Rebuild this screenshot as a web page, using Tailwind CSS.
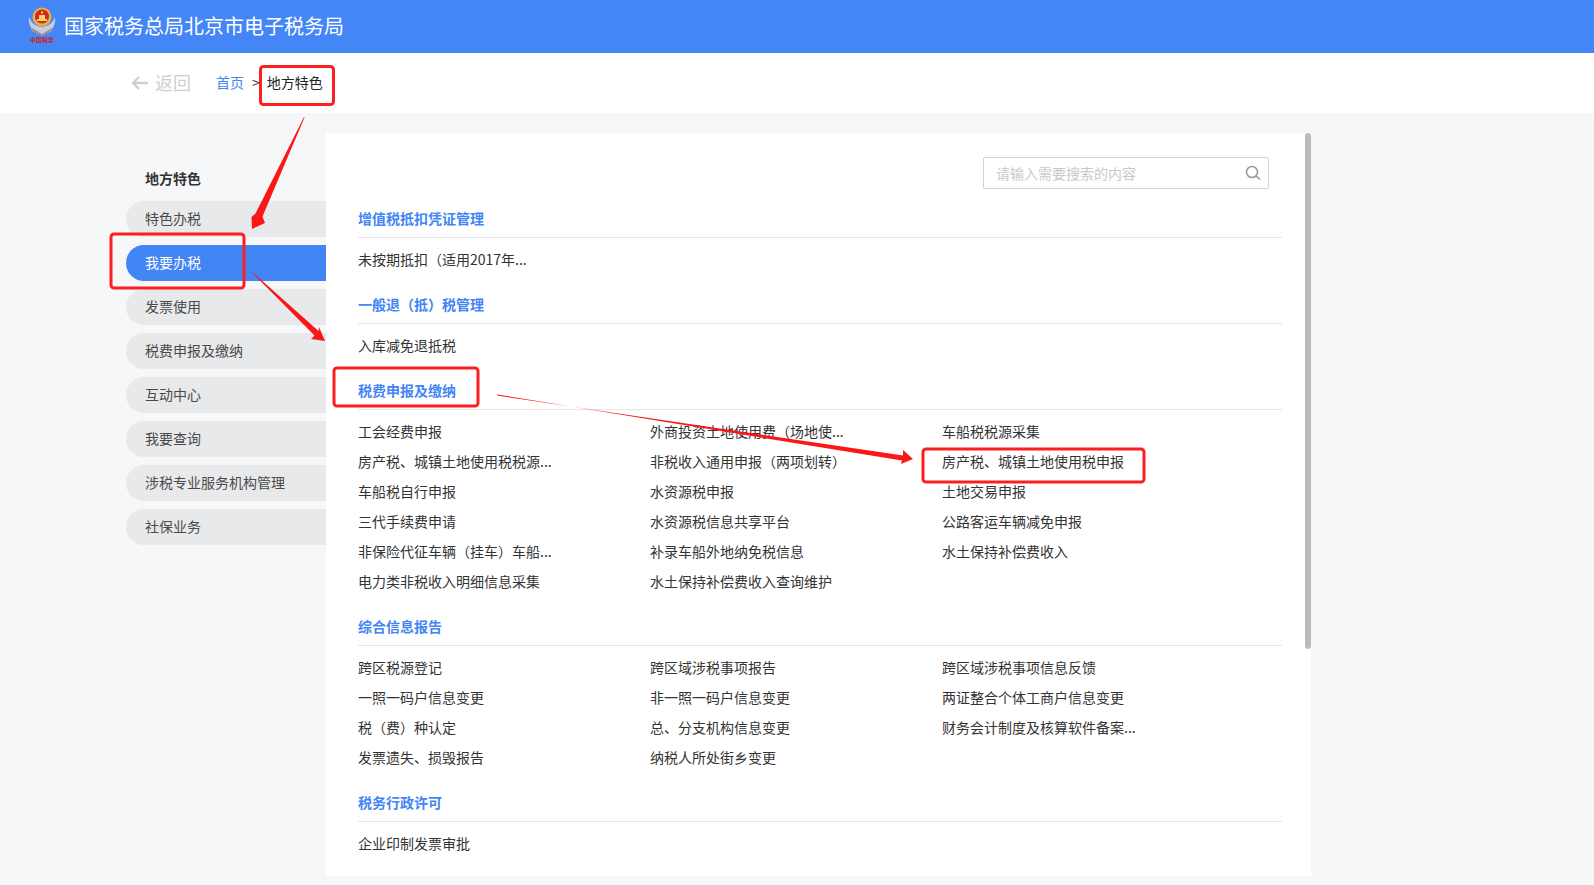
<!DOCTYPE html>
<html lang="zh-CN">

<head>
    <meta charset="UTF-8">
    <title>国家税务总局北京市电子税务局</title>
    <script src="https://cdn.jsdelivr.net/npm/@tailwindcss/browser@4"></script>
</head>

<body class="relative h-[885px] overflow-hidden bg-[#f6f7f9] text-[14px] text-[#333] font-['Noto_Sans_CJK_SC','Liberation_Sans',sans-serif]">
    <!-- header -->
    <header class="h-[53px] bg-[#4486f6] flex items-center pl-[27px]">
        <svg class="w-[30px] h-[46px] shrink-0" viewBox="0 3 30 46">
            <path d="M2 16c-1 7 2 13 8 16l5 1 5-1c6-3 9-9 8-16-2 5-5 9-13 10-8-1-11-5-13-10z" fill="#c9cdd6" />
            <path d="M5 27l10 6 10-6 1 3-11 5-11-5z" fill="#8e97a8" />
            <circle cx="15" cy="16" r="9.500" fill="#e3b04b" />
            <circle cx="15" cy="15.500" r="7" fill="#d8261c" />
            <path d="M10 18h10v2H10zM12 14h6v4h-6zM14 10.500h2v2h-2z" fill="#f6d463" />
            <text x="15" y="40.500" text-anchor="middle" font-size="6" font-weight="700" fill="#c9221a" font-family="'Noto Sans CJK SC',sans-serif">中国税务</text>
        </svg>
        <span class="ml-[7px] pb-[2px] text-[20px] text-white">国家税务总局北京市电子税务局</span>
    </header>

    <!-- breadcrumb -->
    <div class="h-[60px] bg-white flex items-center pl-[131px]">
        <svg class="w-[17px] h-[14px] text-[#cfcfcf]" viewBox="0 0 17 14" fill="none" stroke="currentColor" stroke-width="2.400">
            <path d="M17 7H2M8 1L2 7l6 6" />
        </svg>
        <span class="ml-[7px] pb-[2px] text-[18px] text-[#cfcfcf]">返回</span>
        <a href="#" class="ml-[25px] pb-[2px] text-[#4285f4]">首页</a>
        <span class="ml-[8px] pb-[2px] text-[#333]">&gt;</span>
        <span class="ml-[7px] pb-[2px] text-[#222]">地方特色</span>
    </div>

    <div class="flex mt-[20px]">
        <!-- sidebar -->
        <aside class="w-[326px] pl-[126px] pt-[31px]">
            <h2 class="h-[37px] pl-[19px] font-bold leading-[28px]">地方特色</h2>
            <ul class="flex flex-col gap-[8px] text-[#4a4a4a]">
                <li class="h-[36px] pl-[19px] pb-[2px] flex items-center rounded-l-full bg-[#e8e9eb]">特色办税</li>
                <li class="h-[36px] pl-[19px] pb-[2px] flex items-center rounded-l-full bg-[#4285f4] text-white">我要办税</li>
                <li class="h-[36px] pl-[19px] pb-[2px] flex items-center rounded-l-full bg-[#e8e9eb]">发票使用</li>
                <li class="h-[36px] pl-[19px] pb-[2px] flex items-center rounded-l-full bg-[#e8e9eb]">税费申报及缴纳</li>
                <li class="h-[36px] pl-[19px] pb-[2px] flex items-center rounded-l-full bg-[#e8e9eb]">互动中心</li>
                <li class="h-[36px] pl-[19px] pb-[2px] flex items-center rounded-l-full bg-[#e8e9eb]">我要查询</li>
                <li class="h-[36px] pl-[19px] pb-[2px] flex items-center rounded-l-full bg-[#e8e9eb]">涉税专业服务机构管理</li>
                <li class="h-[36px] pl-[19px] pb-[2px] flex items-center rounded-l-full bg-[#e8e9eb]">社保业务</li>
            </ul>
        </aside>

        <!-- panel -->
        <main class="relative w-[985px] h-[743px] bg-white pl-[32px] pr-[29px] pt-[24px] overflow-hidden">
            <div class="flex justify-end mr-[13px] mb-[11px]">
                <div class="w-[286px] h-[32px] border border-[#d2d2d2] rounded-[2px] flex items-center pl-[12px] pr-[7px]">
                    <input type="text" placeholder="请输入需要搜索的内容" class="flex-1 outline-none placeholder:text-[#c8c8c8]">
                    <svg class="w-[16px] h-[16px] text-[#9a9a9a]" viewBox="0 0 16 16" fill="none" stroke="currentColor" stroke-width="1.600">
                        <circle cx="7" cy="7" r="5.500" />
                        <path d="M11 11l4 3.500" />
                    </svg>
                </div>
            </div>

            <section class="mb-[12px]">
                <h3 class="h-[38px] flex items-center border-b border-[#e6e6e6] pb-[1px] font-bold text-[#4285f4] mb-[6px]">增值税抵扣凭证管理</h3>
                <div class="grid grid-cols-[292px_292px_292px] auto-rows-[30px] items-center">
                    <a href="#">未按期抵扣（适用2017年...</a>
                </div>
            </section>

            <section class="mb-[12px]">
                <h3 class="h-[38px] flex items-center border-b border-[#e6e6e6] pb-[1px] font-bold text-[#4285f4] mb-[6px]">一般退（抵）税管理</h3>
                <div class="grid grid-cols-[292px_292px_292px] auto-rows-[30px] items-center">
                    <a href="#">入库减免退抵税</a>
                </div>
            </section>

            <section class="mb-[12px]">
                <h3 class="h-[38px] flex items-center border-b border-[#e6e6e6] pb-[1px] font-bold text-[#4285f4] mb-[6px]">税费申报及缴纳</h3>
                <div class="grid grid-cols-[292px_292px_292px] auto-rows-[30px] items-center">
                    <a href="#">工会经费申报</a>
                    <a href="#">外商投资土地使用费（场地使...</a>
                    <a href="#">车船税税源采集</a>
                    <a href="#">房产税、城镇土地使用税税源...</a>
                    <a href="#">非税收入通用申报（两项划转）</a>
                    <a href="#">房产税、城镇土地使用税申报</a>
                    <a href="#">车船税自行申报</a>
                    <a href="#">水资源税申报</a>
                    <a href="#">土地交易申报</a>
                    <a href="#">三代手续费申请</a>
                    <a href="#">水资源税信息共享平台</a>
                    <a href="#">公路客运车辆减免申报</a>
                    <a href="#">非保险代征车辆（挂车）车船...</a>
                    <a href="#">补录车船外地纳免税信息</a>
                    <a href="#">水土保持补偿费收入</a>
                    <a href="#">电力类非税收入明细信息采集</a>
                    <a href="#">水土保持补偿费收入查询维护</a>
                </div>
            </section>

            <section class="mb-[12px]">
                <h3 class="h-[38px] flex items-center border-b border-[#e6e6e6] pb-[1px] font-bold text-[#4285f4] mb-[6px]">综合信息报告</h3>
                <div class="grid grid-cols-[292px_292px_292px] auto-rows-[30px] items-center">
                    <a href="#">跨区税源登记</a>
                    <a href="#">跨区域涉税事项报告</a>
                    <a href="#">跨区域涉税事项信息反馈</a>
                    <a href="#">一照一码户信息变更</a>
                    <a href="#">非一照一码户信息变更</a>
                    <a href="#">两证整合个体工商户信息变更</a>
                    <a href="#">税（费）种认定</a>
                    <a href="#">总、分支机构信息变更</a>
                    <a href="#">财务会计制度及核算软件备案...</a>
                    <a href="#">发票遗失、损毁报告</a>
                    <a href="#">纳税人所处街乡变更</a>
                </div>
            </section>

            <section>
                <h3 class="h-[38px] flex items-center border-b border-[#e6e6e6] pb-[1px] font-bold text-[#4285f4] mb-[6px]">税务行政许可</h3>
                <div class="grid grid-cols-[292px_292px_292px] auto-rows-[30px] items-center">
                    <a href="#">企业印制发票审批</a>
                </div>
            </section>

            <!-- scrollbar thumb -->
            <div class="absolute right-0 top-0 w-[6px] h-[516px] rounded-[3px] bg-[#bbbbbb]"></div>
        </main>
    </div>

    <!-- red annotations drawn over the page -->
    <svg class="absolute left-0 top-0 w-[1594px] h-[885px] pointer-events-none" viewBox="0 0 1594 885" fill="none">
        <g stroke="#fb1f1f" stroke-width="3">
            <rect x="260.500" y="66.500" width="73" height="38" rx="3" />
            <rect x="111" y="234" width="133" height="54" rx="3" />
            <rect x="334" y="368" width="144" height="38" rx="3" />
            <rect x="923" y="449" width="221" height="33" rx="3" />
        </g>
        <g fill="#fb1717">
            <polygon points="304,117 304.500,117.500 262.500,216.500 265,223 252,229 251.500,217 255.500,213.500" />
            <polygon points="250,270.500 250.500,270.500 318.500,331 319,327 325,341 311,339 314.500,335.500" />
            <polygon points="497,394.500 497,395.500 903,455.500 903,450 913,459 901,464 902,460.500" />
        </g>
    </svg>
</body>

</html>
